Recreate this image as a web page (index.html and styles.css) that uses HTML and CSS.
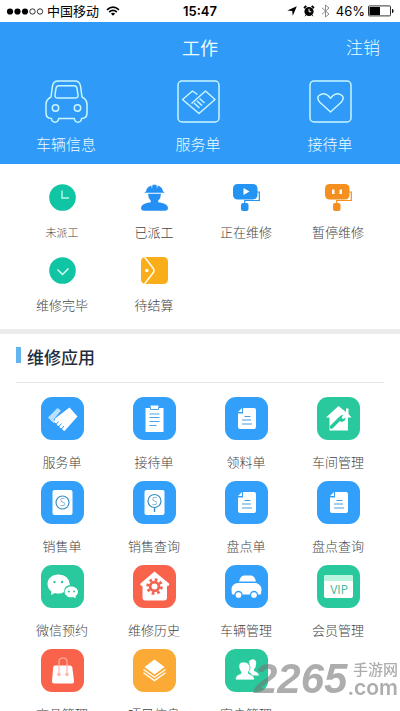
FILE: index.html
```html
<!DOCTYPE html>
<html lang="zh-CN">
<head>
<meta charset="utf-8">
<meta name="viewport" content="width=device-width, initial-scale=1">
<title>工作</title>
<link rel="stylesheet" href="styles.css">
</head>
<body>
<div class="statusbar">
  <div class="carrier">
    <svg class="dots" viewBox="0 0 38 9" width="38" height="9"><g fill="#000"><circle cx="4" cy="4.500" r="3.100"/><circle cx="11.500" cy="4.500" r="3.100"/><circle cx="19" cy="4.500" r="3.100"/></g><g fill="none" stroke="#000" stroke-width=".8"><circle cx="26.500" cy="4.500" r="2.700"/><circle cx="34" cy="4.500" r="2.700"/></g></svg>
    <span>中国移动</span>
    <svg class="wifi" viewBox="0 0 14 10" width="14" height="10"><g fill="none" stroke="#000" stroke-width="1.700"><path d="M1 3.800Q7-1.600 13 3.800M3.200 6Q7 2.600 10.800 6"/></g><path d="M4.900 7.500Q7 5.800 9.100 7.500L7 9.800z"/></svg>
  </div>
  <time class="clock">15:47</time>
  <div class="indicators">
    <svg viewBox="0 0 10 10" width="10" height="10"><path d="M9.800.3 5.800 9.700 5.200 5 .3 4.400z"/></svg>
    <svg viewBox="0 0 12 12" width="12" height="12"><circle cx="6" cy="6.500" r="4.600"/><path d="M1 3 3.300.9M11 3 8.700.9" stroke="#000" stroke-width="1.800"/><path d="M2.800 10.200l-.9 1M9.200 10.200l.9 1" fill="none" stroke="#000"/><path d="M6 3.800v3h2.300" fill="none" stroke="#fff"/></svg>
    <svg viewBox="0 0 9 14" width="9" height="14"><path d="m1 3.800 7 6.200-3.500 3V1L8 4 1 10.200" fill="none" stroke="#8b8b8b"/></svg>
    <span>46%</span>
    <svg viewBox="0 0 26 12" width="26" height="12"><rect x=".5" y=".9" width="22" height="10" rx="1" fill="#fff" stroke="#333"/><path d="M1.500 2h10.500v8H1.500z"/><path d="M24 4q1.600 0 1.600 2T24 8z"/></svg>
  </div>
</div>

<header class="header">
  <div class="titlebar">
    <h1>工作</h1>
    <button type="button" class="logout">注销</button>
  </div>
  <nav class="primary">
    <a href="#vehicle">
      <svg viewBox="0 0 43 43" width="43" height="43"><path d="M6 17 7.500 6Q8.300 1 13 1h17q4.700 0 5.500 5L37 17q5 2.500 5 7.500V33q0 5.500-5.500 5.500-.3 3.700-3.500 3.700t-3.700-3.700H13.700q-.5 3.700-3.700 3.700t-3.500-3.700Q1 38.500 1 33v-8.500Q1 19.500 6 17z"/><path d="M14 5.800h15q2.500 0 3 2.500l1 6.500q.4 3.200-2.700 3.200H12.700q-3.100 0-2.700-3.200l1-6.500q.5-2.500 3-2.500z"/><circle cx="10.500" cy="28" r="3.200"/><circle cx="32.500" cy="28" r="3.200"/></svg>
      <span>车辆信息</span>
    </a>
    <a href="#service">
      <svg viewBox="0 0 43 43" width="43" height="43"><rect x="1" y="1" width="41" height="41" rx="4"/><path d="M20.500 14.500 15.500 11 5.500 19.500l16.500 14L38 19.500 28.500 11 14.500 23.500M17 23l5.500 5M19.800 20.800l5.200 4.800M22.500 18.500l5 4.500"/></svg>
      <span>服务单</span>
    </a>
    <a href="#reception">
      <svg viewBox="0 0 43 43" width="43" height="43"><rect x="1" y="1" width="41" height="41" rx="4"/><path d="M21.500 32 10.800 22.200Q7.300 18 10 15.500 14.500 12 19 15.500l2.500 2.700 2.500-2.700q4.500-3.500 9 0 2.700 2.500-.8 6.700z"/></svg>
      <span>接待单</span>
    </a>
  </nav>
</header>

<main>
<nav class="grid states">
  <a href="#s1"><svg viewBox="0 0 27 27" width="27" height="27"><circle cx="13.500" cy="13.500" r="13.300" fill="#10c5a3"/><path d="M13 6.500v7.500h7" fill="none" stroke="#baf7e7" stroke-width="1.400"/></svg><span class="small">未派工</span></a>
  <a href="#s2"><svg viewBox="0 0 27 27" width="27" height="27" fill="#2490f5"><path d="M5 7.500Q5.500 3 10.300 1.400l.6 3.400.7-4h3.800l.7 4 .6-3.400Q21.500 3 22 7.500q1.500.2 1.500 1.300H3.500q0-1.100 1.500-1.300zM7 9.800h13q0 4-2.800 7v1.400q9.500 1.300 9.800 5.500 0 3-3 3H3q-3 0-3-3 .3-4.200 9.800-5.500v-1.400Q7 13.800 7 9.800z"/></svg><span>已派工</span></a>
  <a href="#s3"><svg viewBox="0 0 27 27" width="27" height="27" fill="#2494f2"><rect width="24.500" height="15.500" rx="4.500"/><rect x="8" y="19" width="7.500" height="8" rx="2"/><path d="M24 8h2.300v8.500H11.700V20" fill="none" stroke="#2494f2" stroke-width="1.200"/><path d="m10.500 4 6 3.500-6 3.500z" fill="#fff"/></svg><span>正在维修</span></a>
  <a href="#s4"><svg viewBox="0 0 27 27" width="27" height="27" fill="#f58f20"><rect width="24.500" height="15.500" rx="4.500"/><rect x="8" y="19" width="7.500" height="8" rx="2"/><path d="M24 8h2.300v8.500H11.700V20" fill="none" stroke="#f58f20" stroke-width="1.200"/><path d="M7 5.500h2.500v4.500H7zM14.500 5.500H17v4.500h-2.500z" fill="#fff"/></svg><span>暂停维修</span></a>
  <a href="#s5"><svg viewBox="0 0 27 27" width="27" height="27"><circle cx="13.500" cy="13.500" r="13.300" fill="#10c5a3"/><path d="m8.500 12.500 5 5 6-6" fill="none" stroke="#d5fff4" stroke-width="1.500"/></svg><span>维修完毕</span></a>
  <a href="#s6"><svg viewBox="0 0 27 27" width="27" height="27"><rect width="27" height="27" rx="4.500" fill="#f9ad18"/><path d="m3.500 0 8.500 11q2 2.500 0 5L3.500 27" fill="none" stroke="#fffbea" stroke-width="1.600"/><circle cx="5.800" cy="13.500" r="1.800" fill="#fff"/></svg><span>待结算</span></a>
</nav>

<section class="apps">
  <h2>维修应用</h2>
  <nav class="grid tiles">
    <a href="#a1"><svg class="blue" viewBox="0 0 43 43" width="43" height="43"><path d="M7 20.500 16.500 11l3.500 2.500-7.500 9 2 2-2 1.500z" fill="#b9e0ff"/><path d="m14 21.500 14.500-11 8 9L23.500 34l-1.500-.8-1.500-2-1.500-.5-1-1.800-1.700-.5-.8-2-1.800-.7-.2-1.700z"/><path d="m15 27.500 2.500-3M17.500 30l3-3.500M20 32.500l3-3.500" stroke="#32a0fa"/></svg><span>服务单</span></a>
    <a href="#a2"><svg class="blue" viewBox="0 0 43 43" width="43" height="43"><path d="M12.500 11h5V8.500h8V11h5v24h-18z"/><path d="M17.500 10v2.500h8V10M16.500 17h10M16.500 20.500h10M16.500 24.500h10M16.500 28.500h7" fill="none" stroke="#4aa4e9"/></svg><span>接待单</span></a>
    <a href="#a3"><svg class="blue" viewBox="0 0 43 43" width="43" height="43"><path d="M18 11h11q2 0 2 2v17q0 2-2 2H15q-2 0-2-2V16.500h5zM13 15l4-4v4z"/><path d="M19.500 19.500h6M17 23h9M17 27h10" stroke="#499fde" stroke-width="1.200"/></svg><span>领料单</span></a>
    <a href="#a4"><svg class="green" viewBox="0 0 43 43" width="43" height="43"><path d="m21.500 9 7.500 6v-3.500h2.500V17l3 3.500H31v13H12.500v-13H9z"/><path d="m14.500 30 8.500-8.500" stroke="#29c99d" stroke-width="3.500" stroke-linecap="round"/><path d="M26.500 17.500 23 19l-1.500 3.500L24 25l3.500-1 1.300-3.500-2.800 1.500-1.500-1.500z" fill="#29c99d"/></svg><span>车间管理</span></a>
    <a href="#a5"><svg class="blue" viewBox="0 0 43 43" width="43" height="43"><rect x="11.500" y="9" width="20" height="25" rx="2"/><circle cx="21.500" cy="21.500" r="6.500" fill="none" stroke="#398fc7" stroke-width="1.200"/><text x="21.500" y="25" class="coin">S</text></svg><span>销售单</span></a>
    <a href="#a6"><svg class="blue" viewBox="0 0 43 43" width="43" height="43"><rect x="11.500" y="9" width="20" height="25" rx="2"/><circle cx="21.500" cy="20" r="6.500" fill="none" stroke="#398fc7" stroke-width="1.200"/><path d="M21.500 26.500v4.500" stroke="#398fc7" stroke-width="1.400"/><text x="21.500" y="23.500" class="coin">S</text></svg><span>销售查询</span></a>
    <a href="#a7"><svg class="blue" viewBox="0 0 43 43" width="43" height="43"><path d="M18 11h11q2 0 2 2v17q0 2-2 2H15q-2 0-2-2V16.500h5zM13 15l4-4v4z"/><path d="M19.500 19.500h6M17 23h9M17 27h10" stroke="#499fde" stroke-width="1.200"/></svg><span>盘点单</span></a>
    <a href="#a8"><svg class="blue" viewBox="0 0 43 43" width="43" height="43"><path d="M18 11h11q2 0 2 2v17q0 2-2 2H15q-2 0-2-2V16.500h5zM13 15l4-4v4z"/><path d="M19.500 19.500h6M17 23h9M17 27h10" stroke="#499fde" stroke-width="1.200"/></svg><span>盘点查询</span></a>
    <a href="#a9"><svg class="green" viewBox="0 0 43 43" width="43" height="43"><path d="M17.500 9.500C10.500 9.500 6.500 14 6.500 19q0 4.500 4 7.500L10 30l4-2q5 1.500 9-1 0-6.500 6-7Q28 9.500 17.500 9.500z"/><path d="M30 21.500c-4 0-6.300 2.500-6.300 5.500 0 4 4.500 6 8.300 5l2.800 1.300-.3-2.300c1.500-1 2.500-2.500 2.500-4 0-3-2.500-5.500-7-5.500z"/><g fill="#29c99d"><circle cx="13.500" cy="17" r="1.200"/><circle cx="21" cy="17" r="1.200"/><circle cx="27.800" cy="26.500" r="1"/><circle cx="33" cy="26.500" r="1"/></g></svg><span>微信预约</span></a>
    <a href="#a10"><svg class="red" viewBox="0 0 43 43" width="43" height="43"><path d="M21.500 6.500 36 18.500q1 2-2 2.500v11.500q0 3-3 3H12.500q-3 0-3-3V21q-3-.5-2-2.500z"/><circle cx="21.500" cy="21.500" r="4.400" fill="none" stroke="#f26350" stroke-width="2.800"/><circle cx="21.500" cy="21.500" r="7" fill="none" stroke="#f26350" stroke-width="2.600" stroke-dasharray="2.750 2.750"/></svg><span>维修历史</span></a>
    <a href="#a11"><svg class="blue" viewBox="0 0 43 43" width="43" height="43"><path d="M14 16.500q1.500-6 5-6h7q3.500 0 5 6zM12.500 18h19q5 2 5 6.500 0 3.500-1 5H7.500q-1-1-1-5 0-5.500 6-6.500z"/><g stroke="#329dfa" stroke-width="1.300"><circle cx="13.500" cy="30" r="3.500"/><circle cx="29" cy="30" r="3.500"/></g></svg><span>车辆管理</span></a>
    <a href="#a12"><svg class="green" viewBox="0 0 43 43" width="43" height="43"><rect x="7" y="10" width="29" height="23" rx="2"/><path d="M7 16v-4q0-2 2-2h25q2 0 2 2v4z" fill="#b9f4df"/><text x="22" y="29" class="vip">VIP</text></svg><span>会员管理</span></a>
    <a href="#a13"><svg class="red" viewBox="0 0 43 43" width="43" height="43"><path d="M14 16.500h15q2 0 2.300 2L33 32q.2 2.500-2 2.500H13q-2.200 0-2-2.500l1.200-13.500q.2-2 1.800-2z"/><path d="M18 25V12.500q0-3.500 4-3.500t4 3.500V25" fill="none" stroke="#ffb6a8" stroke-width="1.200"/><g fill="#ffb6a8"><circle cx="18" cy="25.500" r="1.800"/><circle cx="26" cy="25.500" r="1.800"/></g></svg><span>商品管理</span></a>
    <a href="#a14"><svg class="orange" viewBox="0 0 43 43" width="43" height="43"><path d="m21.500 10.500 10 7.500-10 7.500-10-7.500z"/><path d="m10.500 20.500 11 7.800 11-7.800M10.500 23.800l11 7.800 11-7.800" fill="none" stroke="#fff" stroke-width="1.300"/></svg><span>项目信息</span></a>
    <a href="#a15"><svg class="green" viewBox="0 0 43 43" width="43" height="43"><path d="M24 12q5-3.500 7 .5.800 4.500-2 8V22q4.500 1.500 5 4.500h-7q-1-2.500-4-4 2.500-4 1-10.500z"/><path d="M18.500 13c-6 0-5.500 6-2.500 10v1.500C12 26 10.500 27 10.500 31h19c0-4-2.500-5-6-6.500V23c3-4 1.500-10-5-10z" stroke="#29c99d" stroke-width=".8"/></svg><span>客户管理</span></a>
  </nav>
</section>
</main>

<div class="watermark">
  <span class="mark-number">2265</span>
  <span class="mark-side"><span>手游网</span><span class="mark-domain">.com</span></span>
</div>
</body>
</html>
```
FILE: styles.css
```css
* {
  box-sizing: border-box;
}

html {
  scrollbar-width: none;
}

body {
  margin: 0;
  background: #fff;
  color: #444;
  font-family: "Noto Sans CJK SC", sans-serif;
  font-size: 13px;
  font-weight: 300;
  line-height: 20px;
}

svg {
  display: block;
  flex: none;
}

a {
  color: inherit;
  text-decoration: none;
}

.statusbar {
  display: grid;
  grid-template-columns: 1fr auto 1fr;
  align-items: center;
  height: 22px;
  padding: 0 6px;
  color: #000;
  font-weight: 400;
}

.carrier,
.indicators {
  display: flex;
  align-items: center;
}

.carrier {
  gap: 3px;
}

.wifi {
  margin-left: 4px;
}

.clock {
  font-family: Inter, sans-serif;
  font-weight: 600;
}

.indicators {
  justify-content: flex-end;
  gap: 6px;
  font-family: Inter, sans-serif;
}

.indicators span + svg {
  margin-left: -3px;
}

.header {
  background: #2f9af7;
  color: #e9fdff;
}

.titlebar {
  display: grid;
  grid-template-columns: 1fr auto 1fr;
  align-items: center;
  height: 50px;
  padding: 0 20px;
}

.titlebar h1 {
  grid-column: 2;
  margin: 0;
  font-size: 18px;
  font-weight: 400;
}

.logout {
  justify-self: end;
  padding: 0;
  border: 0;
  background: none;
  color: inherit;
  font: inherit;
  font-size: 17px;
}

.primary {
  display: grid;
  grid-template-columns: repeat(3, 1fr);
  padding: 8px 4px 10px 0;
  font-size: 15px;
}

.primary a,
.grid a {
  display: flex;
  flex-direction: column;
  align-items: center;
}

.primary a {
  gap: 11px;
}

.primary svg {
  fill: none;
  stroke: #c9f6ff;
  stroke-width: 1.5px;
  stroke-linejoin: round;
}

.grid {
  display: grid;
  grid-template-columns: repeat(4, 1fr);
}

.states {
  row-gap: 15px;
  padding: 20px 16px 14px;
}

.states a {
  gap: 11px;
}

.small {
  font-size: 11px;
}

.apps {
  padding: 11px 16px 0;
  border-top: 5px solid #ececec;
}

.apps h2 {
  display: flex;
  gap: 6px;
  margin: 0;
  padding-bottom: 13px;
  border-bottom: 1px solid #e8e8e8;
  color: #1e2e40;
  font-size: 17px;
  font-weight: 500;
  line-height: 24px;
}

.apps h2::before {
  width: 5px;
  height: 16px;
  margin-top: 2px;
  background: #62b5ee;
  content: "";
}

.tiles {
  row-gap: 9px;
  padding-top: 14px;
}

.tiles a {
  gap: 12px;
}

.tiles svg {
  border-radius: 11px;
  fill: #fff;
}

.blue {
  background: #32a0fa;
}

.green {
  background: #29c99d;
}

.red {
  background: #fa634b;
}

.orange {
  background: #fbab35;
}

.coin,
.vip {
  font-family: "Open Sans", sans-serif;
  text-anchor: middle;
}

.coin {
  fill: #398fc7;
  font-size: 10px;
}

.vip {
  fill: #43b796;
  font-size: 12px;
  font-weight: 400;
}

.watermark {
  position: fixed;
  right: 2px;
  bottom: 14px;
  display: flex;
  align-items: center;
  color: #777;
  font-family: "Liberation Sans", "Noto Sans CJK SC", sans-serif;
  font-weight: 700;
  opacity: 0.6;
  pointer-events: none;
}

.mark-number {
  font-size: 42px;
  font-style: italic;
  line-height: 34px;
}

.mark-side {
  display: flex;
  flex-direction: column;
  align-items: flex-end;
  font-size: 15px;
  font-weight: 500;
  line-height: 18px;
}

.mark-domain {
  font-family: Inter, sans-serif;
  font-size: 21px;
  font-weight: 600;
}
```
